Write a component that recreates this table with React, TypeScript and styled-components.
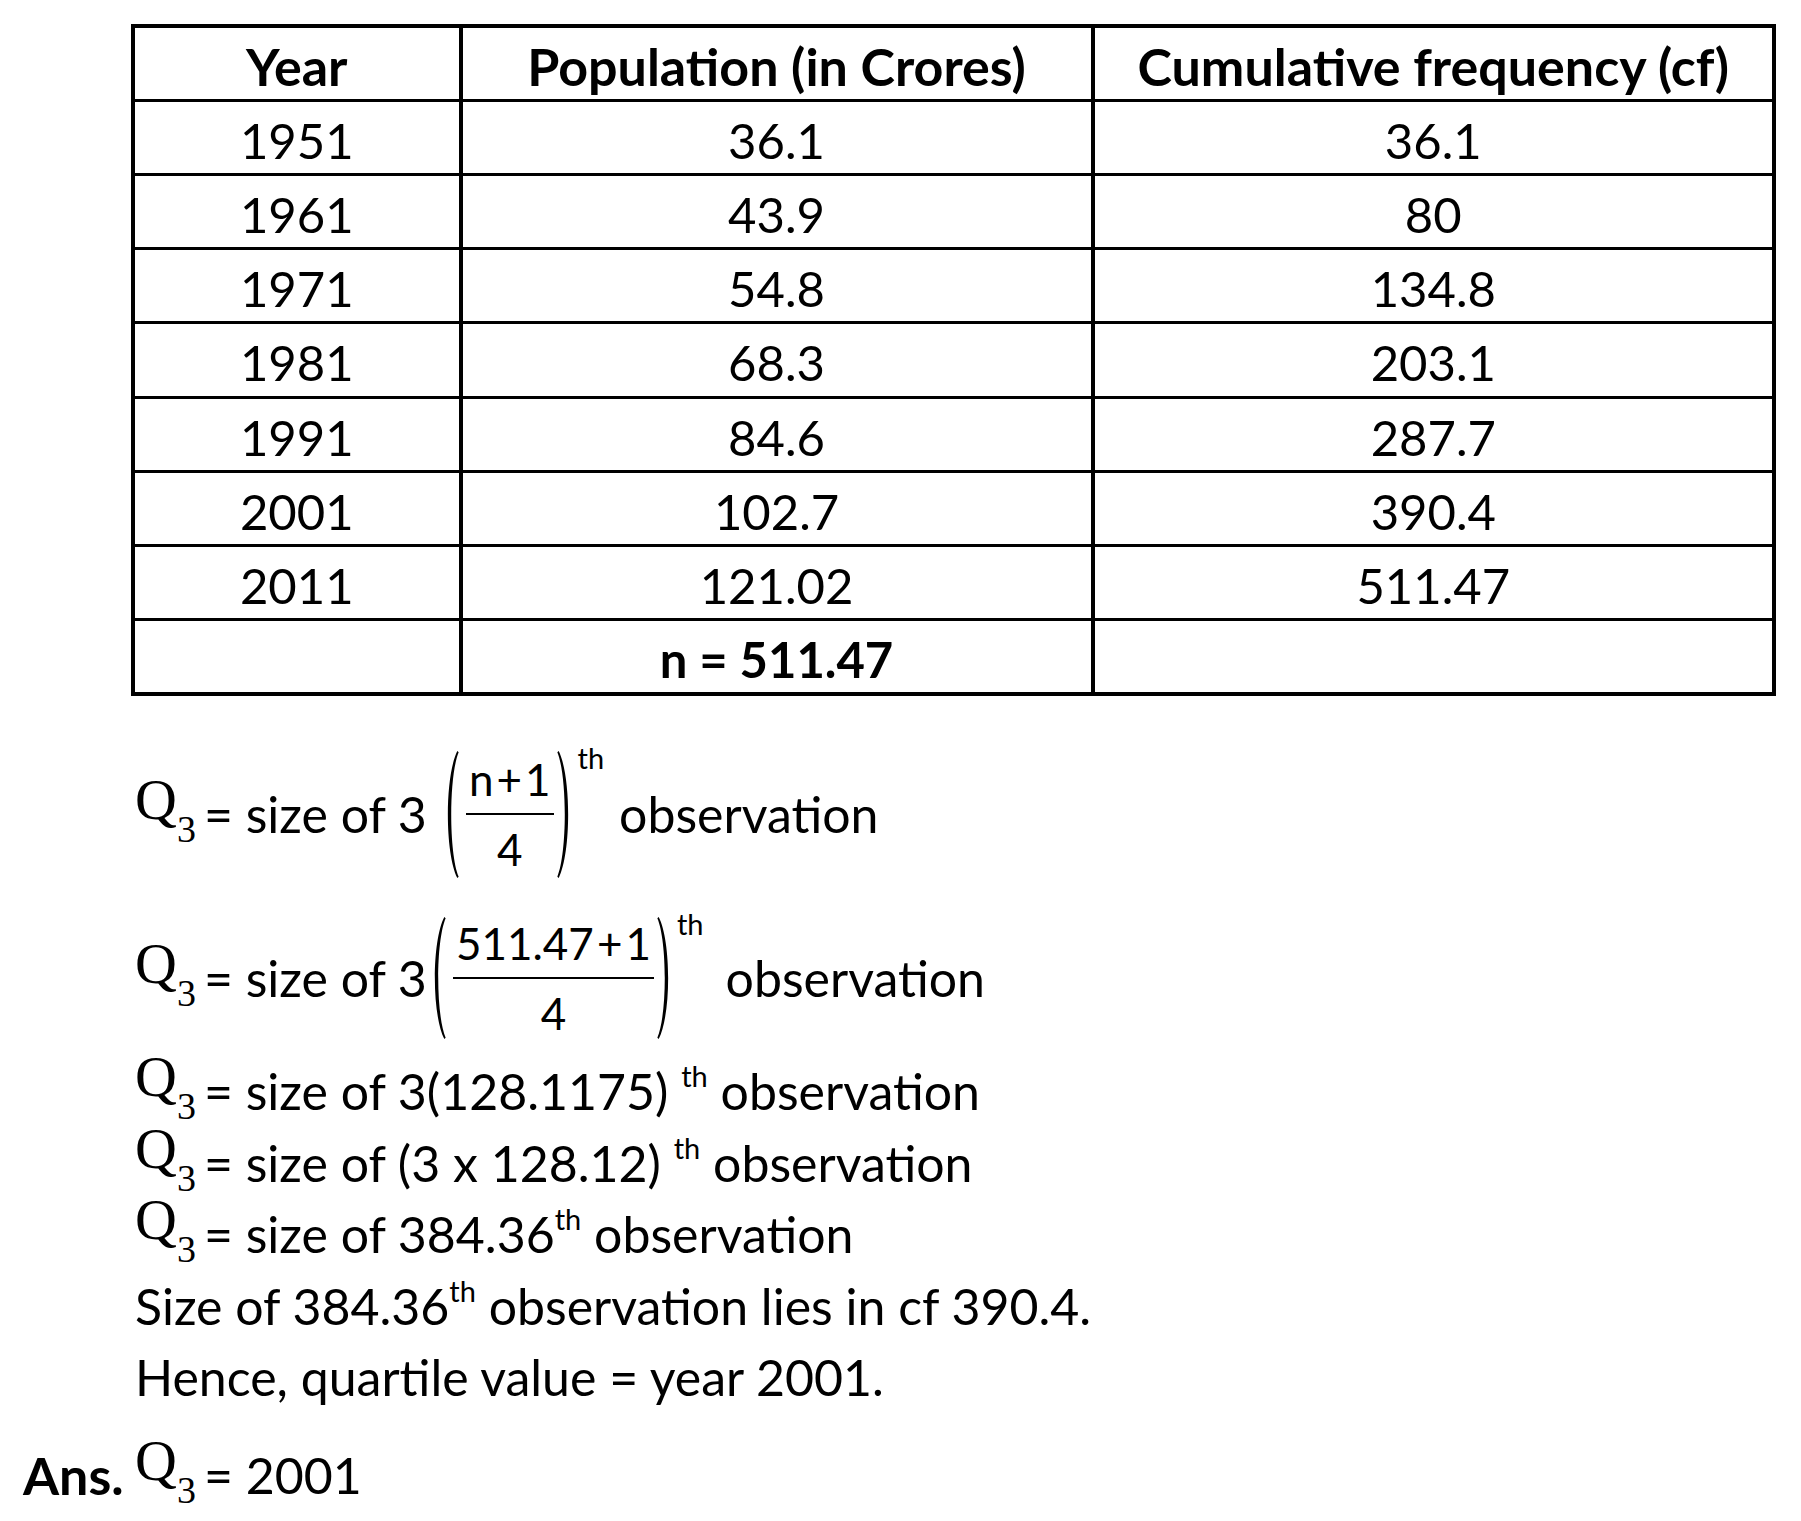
import React from 'react'
import styled, { createGlobalStyle } from 'styled-components'

const GlobalStyle = createGlobalStyle`
  html,
  body {
    background: #fff;
    margin: 0;
    padding: 0;
  }

  body {
    color: #000;
    font-family: Lato, 'Open Sans', sans-serif;
  }
`

const Page = styled.main`
  box-sizing: border-box;
  min-height: 1521px;
  padding-top: 24px;
  width: 1801px;
`

const Table = styled.div`
  background: #000;
  border: 4px solid #000;
  box-sizing: border-box;
  column-gap: 4px;
  display: grid;
  grid-template-columns: 323.5px 628px 1fr;
  grid-template-rows: repeat(9, 1fr);
  height: 672px;
  margin-left: 131px;
  row-gap: 3px;
  width: 1645px;
`

const Cell = styled.div<{ $bold?: boolean; $head?: boolean }>`
  align-items: center;
  background: #fff;
  box-sizing: border-box;
  display: flex;
  font-size: ${({ $head }) => ($head ? 52 : 49)}px;
  font-weight: ${({ $bold }) => ($bold ? 700 : 400)};
  justify-content: center;
  line-height: 1;
  padding-top: ${({ $head }) => ($head ? 4 : 6)}px;
  white-space: nowrap;
`

const Solution = styled.section`
  margin-top: 53px;
  padding-left: 135px;
`

const FracLine = styled.div<{ $h: number; $mt?: number }>`
  align-items: center;
  display: flex;
  height: ${({ $h }) => $h}px;
  margin-top: ${({ $mt = 0 }) => $mt}px;
  white-space: nowrap;
`

const Run = styled.span<{ $ml?: number }>`
  font-size: 50px;
  line-height: 46px;
  margin-left: ${({ $ml = 0 }) => $ml}px;
`

const TextLine = styled.div<{ $mt?: number }>`
  font-size: 50px;
  line-height: 71.5px;
  margin-top: ${({ $mt = 0 }) => $mt}px;
  white-space: nowrap;
`

const QLetter = styled.span`
  font-family: 'Liberation Serif', 'Times New Roman', serif;
  font-size: 58px;
  line-height: 0;
  vertical-align: 14px;
`

const QSub = styled.span`
  font-family: 'Liberation Serif', 'Times New Roman', serif;
  font-size: 38px;
  line-height: 0;
  margin-right: 8px;
  vertical-align: -9px;
`

const Th = styled.span`
  font-size: 29px;
  line-height: 0;
  vertical-align: 23px;
`

const FracTh = styled.span<{ $ml: number; $mt: number }>`
  align-self: flex-start;
  font-size: 29px;
  line-height: 29px;
  margin-left: ${({ $ml }) => $ml}px;
  margin-top: ${({ $mt }) => $mt}px;
`

const Fraction = styled.span`
  display: inline-flex;
  flex-direction: column;
  font-size: 44px;
  line-height: 50px;
  margin: 0 2px 0 6px;
  text-align: center;
`

const Num = styled.span`
  margin-bottom: 9px;
  padding: 0 3px;
`

const Bar = styled.span`
  background: #000;
  display: block;
  height: 2px;
`

const Den = styled.span`
  margin-top: 9px;
`

const Plus = styled.span`
  margin: 0 3px;
`

const ParenSvg = styled.svg<{ $ml?: number }>`
  display: block;
  flex-shrink: 0;
  margin-left: ${({ $ml = 0 }) => $ml}px;
`

const AnswerRow = styled.div`
  display: flex;
  font-size: 50px;
  line-height: 71.5px;
  margin-top: 26px;
  padding-left: 23px;
  white-space: nowrap;
`

const AnsLabel = styled.span`
  font-size: 52px;
  font-weight: 700;
  width: 112px;
`

const Paren: React.FC<{ right?: boolean; height: number; ml?: number }> = ({ right, height, ml }) => (
  <ParenSvg $ml={ml} width="18" height={height} viewBox="0 0 20 100" preserveAspectRatio="none">
    <path
      d="M17 0 C3 20 3 80 17 100 L18.5 99 C7.5 80 7.5 20 18.5 1 Z"
      fill="#000"
      transform={right ? 'translate(20 0) scale(-1 1)' : undefined}
    />
  </ParenSvg>
)

const Q3 = () => (
  <>
    <QLetter>Q</QLetter>
    <QSub>3</QSub>
  </>
)

const rows = [
  ['1951', '36.1', '36.1'],
  ['1961', '43.9', '80'],
  ['1971', '54.8', '134.8'],
  ['1981', '68.3', '203.1'],
  ['1991', '84.6', '287.7'],
  ['2001', '102.7', '390.4'],
  ['2011', '121.02', '511.47'],
]

export default function App() {
  return (
    <Page>
      <GlobalStyle />
      <Table>
        <Cell $bold $head>
          Year
        </Cell>
        <Cell $bold $head>
          Population (in Crores)
        </Cell>
        <Cell $bold $head>
          Cumulative frequency (cf)
        </Cell>
        {rows.map((row) =>
          row.map((value, index) => <Cell key={row[0] + index}>{value}</Cell>),
        )}
        <Cell />
        <Cell $bold>n = 511.47</Cell>
        <Cell />
      </Table>

      <Solution>
        <FracLine $h={130}>
          <Run>
            <Q3 />= size of 3
          </Run>
          <Paren height={127} ml={15} />
          <Fraction>
            <Num>
              n<Plus>+</Plus>1
            </Num>
            <Bar />
            <Den>4</Den>
          </Fraction>
          <Paren right height={127} />
          <FracTh $ml={4} $mt={-6}>
            th
          </FracTh>
          <Run $ml={15}>observation</Run>
        </FracLine>

        <FracLine $h={124} $mt={37}>
          <Run>
            <Q3 />= size of 3
          </Run>
          <Paren height={122} ml={2} />
          <Fraction>
            <Num>
              511.47<Plus>+</Plus>1
            </Num>
            <Bar />
            <Den>4</Den>
          </Fraction>
          <Paren right height={122} />
          <FracTh $ml={3} $mt={-7}>
            th
          </FracTh>
          <Run $ml={22}>observation</Run>
        </FracLine>

        <TextLine $mt={16}>
          <Q3 />= size of 3(128.1175) <Th>th</Th> observation
        </TextLine>
        <TextLine>
          <Q3 />= size of (3 x 128.12) <Th>th</Th> observation
        </TextLine>
        <TextLine>
          <Q3 />= size of 384.36<Th>th</Th> observation
        </TextLine>
        <TextLine>
          Size of 384.36<Th>th</Th> observation lies in cf 390.4.
        </TextLine>
        <TextLine>Hence, quartile value = year 2001.</TextLine>
      </Solution>

      <AnswerRow>
        <AnsLabel>Ans.</AnsLabel>
        <span>
          <Q3 />= 2001
        </span>
      </AnswerRow>
    </Page>
  )
}
